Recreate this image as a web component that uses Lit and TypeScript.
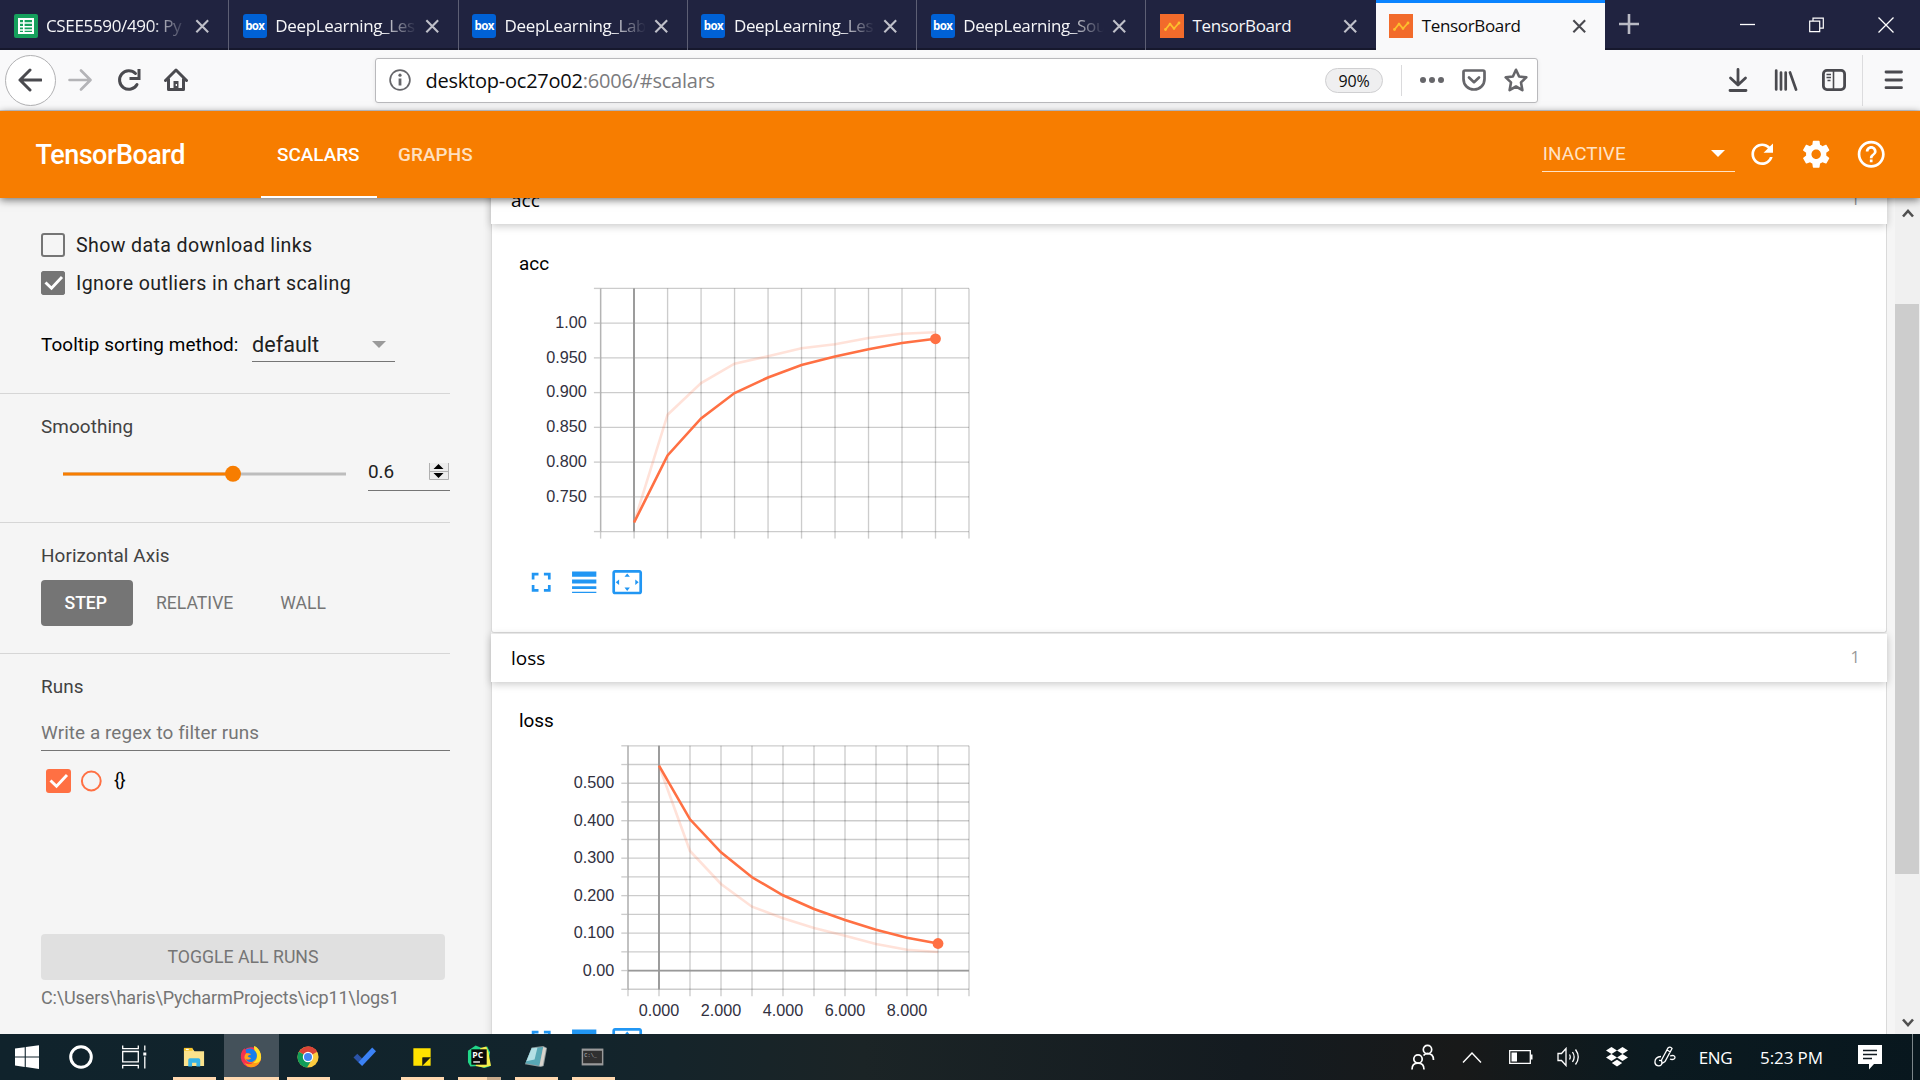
import { LitElement, html, css, svg, nothing } from "lit";
import { customElement, property } from "lit/decorators.js";

interface ChartSpec {
  box: [number, number, number, number];
  left: number;
  right: number;
  top: number;
  bottom: number;
  xs: number[];
  ys: number[];
  zeroX: number;
  zeroY?: number;
  yLabels: { y: number; text: string }[];
  xLabels: { x: number; text: string }[];
  smooth: number[];
  raw: number[];
}

const range = (n: number, start: number, step: number) =>
  Array.from({ length: n }, (_, i) => start + i * step);

const ACC: ChartSpec = {
  box: [519, 276, 460, 269],
  left: 600.6, right: 969, top: 288.4, bottom: 531.6,
  xs: range(12, 600.6, 33.49),
  ys: range(8, 288.4, 34.74),
  zeroX: 634,
  yLabels: [
    { y: 328, text: "1.00" }, { y: 362.7, text: "0.950" }, { y: 397, text: "0.900" },
    { y: 432, text: "0.850" }, { y: 467, text: "0.800" }, { y: 501.8, text: "0.750" },
  ],
  xLabels: [],
  smooth: [522.5, 455.5, 418.5, 393, 377.5, 365, 356.5, 349.3, 343, 338.8],
  raw: [522.5, 414.7, 383, 363.7, 356.3, 348.3, 344.3, 338, 333.7, 332.3],
};

const LOSS: ChartSpec = {
  box: [519, 733, 460, 291],
  left: 628, right: 969, top: 745.8, bottom: 989.3,
  xs: range(12, 628, 31),
  ys: range(14, 745.8, 18.73),
  zeroX: 659,
  zeroY: 970.6,
  yLabels: [
    { y: 788, text: "0.500" }, { y: 826, text: "0.400" }, { y: 863, text: "0.300" },
    { y: 901, text: "0.200" }, { y: 938, text: "0.100" }, { y: 976, text: "0.00" },
  ],
  xLabels: [
    { x: 659, text: "0.000" }, { x: 721, text: "2.000" }, { x: 783, text: "4.000" },
    { x: 845, text: "6.000" }, { x: 907, text: "8.000" },
  ],
  smooth: [765.7, 819.3, 852.3, 877.3, 895.3, 909, 920, 929.7, 937.7, 943.5],
  raw: [765.7, 851, 884, 906.7, 918.3, 928, 935.7, 944, 949.7, 952],
};

@customElement("line-chart")
class LineChart extends LitElement {
  @property({ attribute: false }) spec!: ChartSpec;

  static styles = css`
    :host { display: block; }
    svg { display: block; }
    .grid { stroke: #000; stroke-opacity: 0.2; stroke-width: 1.35; }
    .axis { stroke: #b4b4b4; stroke-width: 1.35; }
    .zero { stroke: #999; stroke-width: 1.9; }
    .tick { stroke: #ccc; stroke-width: 1.35; }
    text { font: 16.2px "Liberation Sans", Arial, sans-serif; fill: #32313f; }
    .end { text-anchor: end; }
    .mid { text-anchor: middle; }
    polyline { fill: none; stroke: #ff7043; stroke-width: 2.6; }
    .raw { stroke-opacity: 0.2; }
    .dot { fill: #ff7043; }
  `;

  render() {
    const s = this.spec;
    const points = (v: number[]) => v.map((y, i) => `${s.xs[i + 1]},${y}`).join(" ");
    return html`<svg width=${s.box[2]} height=${s.box[3]} viewBox=${s.box.join(" ")}>
      ${s.xs.map((x) => svg`<line class="grid" x1=${x} x2=${x} y1=${s.top} y2=${s.bottom} />
        <line class="tick" x1=${x} x2=${x} y1=${s.bottom} y2=${s.bottom + 7} />`)}
      ${s.ys.map((y) => svg`<line class="grid" x1=${s.left} x2=${s.right} y1=${y} y2=${y} />
        <line class="tick" x1=${s.left - 6.7} x2=${s.left} y1=${y} y2=${y} />`)}
      <line class="axis" x1=${s.left} x2=${s.left} y1=${s.top} y2=${s.bottom} />
      <line class="zero" x1=${s.zeroX} x2=${s.zeroX} y1=${s.top} y2=${s.bottom} />
      ${s.zeroY ? svg`<line class="zero" x1=${s.left} x2=${s.right} y1=${s.zeroY} y2=${s.zeroY} />` : nothing}
      ${s.yLabels.map((l) => svg`<text class="end" x=${s.left - 13.8} y=${l.y}>${l.text}</text>`)}
      ${s.xLabels.map((l) => svg`<text class="mid" x=${l.x} y="1016">${l.text}</text>`)}
      <polyline class="raw" points=${points(s.raw)} />
      <polyline points=${points(s.smooth)} />
      <circle class="dot" cx=${s.xs[10]} cy=${s.smooth[9]} r="5.4" />
    </svg>`;
  }
}

const P = {
  refresh: "M17.65 6.35C16.2 4.9 14.21 4 12 4c-4.42 0-7.99 3.58-7.99 8s3.57 8 7.99 8c3.73 0 6.84-2.55 7.73-6h-2.08c-.82 2.33-3.04 4-5.65 4-3.31 0-6-2.69-6-6s2.69-6 6-6c1.66 0 3.14.69 4.22 1.78L13 11h7V4l-2.35 2.35z",
  gear: "M19.43 12.98c.04-.32.07-.64.07-.98s-.03-.66-.07-.98l2.11-1.65c.19-.15.24-.42.12-.64l-2-3.46c-.12-.22-.39-.3-.61-.22l-2.49 1c-.52-.4-1.08-.73-1.69-.98l-.38-2.65C14.46 2.18 14.25 2 14 2h-4c-.25 0-.46.18-.49.42l-.38 2.65c-.61.25-1.17.59-1.69.98l-2.49-1c-.23-.09-.49 0-.61.22l-2 3.46c-.13.22-.07.49.12.64l2.11 1.65c-.04.32-.07.65-.07.98s.03.66.07.98l-2.11 1.65c-.19.15-.24.42-.12.64l2 3.46c.12.22.39.3.61.22l2.49-1c.52.4 1.08.73 1.69.98l.38 2.65c.03.24.24.42.49.42h4c.25 0 .46-.18.49-.42l.38-2.65c.61-.25 1.17-.59 1.69-.98l2.49 1c.23.09.49 0 .61-.22l2-3.46c.12-.22.07-.49-.12-.64l-2.11-1.65zM12 15.5c-1.93 0-3.5-1.57-3.5-3.5s1.57-3.5 3.5-3.5 3.5 1.57 3.5 3.5-1.57 3.5-3.5 3.5z",
  help: "M11 18h2v-2h-2v2zm1-16C6.48 2 2 6.48 2 12s4.48 10 10 10 10-4.48 10-10S17.52 2 12 2zm0 18c-4.41 0-8-3.59-8-8s3.59-8 8-8 8 3.59 8 8-3.59 8-8 8zm0-14c-2.21 0-4 1.79-4 4h2c0-1.1.9-2 2-2s2 .9 2 2c0 2-3 1.75-3 5h2c0-2.25 3-2.5 3-5 0-2.21-1.79-4-4-4z",
  fullscreen: "M7 14H5v5h5v-2H7v-3zm-2-4h2V7h3V5H5v5zm12 7h-3v2h5v-5h-2v3zM14 5v2h3v3h2V5h-5z",
  weight: "M3 17h18v-2H3v2zm0 3h18v-1H3v1zm0-7h18v-3H3v3zm0-9v4h18V4H3z",
  overscan: "M12.01 5.5L10 8h4l-1.99-2.5zM18 10v4l2.5-1.99L18 10zM6 10l-2.5 2.01L6 14v-4zm8 6h-4l2.01 2.5L14 16zm7-13H3c-1.1 0-2 .9-2 2v14c0 1.1.9 2 2 2h18c1.1 0 2-.9 2-2V5c0-1.1-.9-2-2-2zm0 16.01H3V4.99h18v14.02z",
};

const material = (d: string) => html`<svg class="mi" viewBox="0 0 24 24"><path fill="currentColor" d=${d} /></svg>`;

@customElement("scalar-category")
class ScalarCategory extends LitElement {
  @property() name = "";
  @property({ attribute: false }) spec!: ChartSpec;

  static styles = css`
    :host { display: block; }
    .head {
      height: 48px; display: flex; align-items: center; justify-content: space-between;
      padding: 1px 27px 0 20px; background: #fff; position: relative; color: #000; box-sizing: border-box;
      font: 19px/47px "Open Sans", "Noto Sans", sans-serif;
      box-shadow: 0 2px 8px rgba(0, 0, 0, 0.22);
    }
    .name { letter-spacing: 0; }
    .count { color: #999; font-size: 16.5px; line-height: 44px; padding-bottom: 3px; }
    .card {
      border: 1px solid #dadada; border-top: 0; border-radius: 0 0 3px 3px; background: #fff;
      padding: 27.5px 0 0 27px; box-sizing: border-box; height: 408.8px;
    }
    .title { font: 18.9px/24px Roboto, sans-serif; color: #000; }
    .tools { display: flex; gap: 11px; padding-left: 5.5px; color: #2196f3; }
    .tools.spaced { margin-top: 21.3px; }
    .mi { width: 32.4px; height: 32.4px; display: block; }
  `;

  render() {
    return html`
      <div class="head"><span class="name">${this.name}</span><span class="count">1</span></div>
      <div class="card">
        <div class="title">${this.name}</div>
        <line-chart .spec=${this.spec}></line-chart>
        <div class="tools ${this.spec.xLabels.length ? "" : "spaced"}">
          ${material(P.fullscreen)}${material(P.weight)}${material(P.overscan)}
        </div>
      </div>`;
  }
}

const closeIcon = html`<svg class="x" viewBox="0 0 16 16"><path d="M1.5 1.5 14.5 14.5M14.5 1.5 1.5 14.5" fill="none" stroke="currentColor" stroke-width="2.3" /></svg>`;

const favicons: Record<string, unknown> = {
  sheet: html`<svg class="fav" viewBox="0 0 24 24"><rect width="24" height="24" rx="2" fill="#16a05d" /><path fill="#fff" fill-rule="evenodd" d="M4 4h16v16H4zM6 6v2.2h3V6zm4.6 0v2.2H18V6zM6 9.8V12h3V9.8zm4.6 0V12H18V9.8zM6 13.5v1.8h3v-1.8zm4.6 0v1.8H18v-1.8zM6 16.7V18h3v-1.3zm4.6 0V18H18v-1.3z" /></svg>`,
  box: html`<span class="fav boxlogo">box</span>`,
  tb: html`<svg class="fav" viewBox="0 0 24 24"><rect width="24" height="24" fill="#f26b2b" /><path d="M5.500 15.500 10 10l4 4.500L19 9" fill="none" stroke="#fdbf2d" stroke-width="1.800" /><circle cx="5.500" cy="15.500" r="1.400" fill="#fdbf2d" /><circle cx="10" cy="10" r="1.300" fill="#fdbf2d" /><circle cx="14" cy="14.500" r="1.300" fill="#fdbf2d" /><circle cx="19" cy="9" r="1.400" fill="#fdbf2d" /></svg>`,
};

const TABS: { icon: string; title: string; fade?: boolean; active?: boolean }[] = [
  { icon: "sheet", title: "CSEE5590/490: Py", fade: true },
  { icon: "box", title: "DeepLearning_Les", fade: true },
  { icon: "box", title: "DeepLearning_Lab", fade: true },
  { icon: "box", title: "DeepLearning_Les", fade: true },
  { icon: "box", title: "DeepLearning_Sou", fade: true },
  { icon: "tb", title: "TensorBoard" },
  { icon: "tb", title: "TensorBoard", active: true },
];

const TASKS = [
  {
    cls: "open",
    art: svg`<path d="M2 4h9l2 2.500h10V22H2z" fill="#fbe28c" /><path d="M2 3h9v3H2z" fill="#f9c527" /><path d="M4 4h3v1.300H4z" fill="#fff" /><path d="M6.500 22.500V15.500q0-1.800 1.800-1.800h8.900q1.800 0 1.800 1.800v7h-4v-4H10.500v4z" fill="#36b3e8" />`,
  },
  {
    cls: "open active",
    art: svg`<circle cx="12.500" cy="12.800" r="10.500" fill="#f6305a" /><path d="M12.500 23.300A10.500 10.500 0 0 0 23 12.500C22.800 7 19.500 2.500 16 1c.3 3 .5 4-1 6-3 1-6 6-4 9-3-.3-5-2-6-4-1.500 5 2 11 7.500 11.300z" fill="#ff9d16" /><path d="M23 12.500C23 7 19.500 2.500 16 1c-1.500 3 2 6 2.500 9 .6 4-1 7-3.500 8.500C20.500 19.500 23 17 23 12.500z" fill="#ffe12b" /><path d="M7 5c4-3 9-1 11 3 1.500 4 .4 8-4 9.500-3 .8-6-.3-7-3 2 1 4 .7 5.500-1-2 0-3.500-.6-3.500-2 1-1 3-1 3.500-2-1.500-1-3-1-4.500-1C6.500 7.500 6.500 6.500 7 5z" fill="#167dee" /><path d="M7.500 8.500c1.500 0 3.500 0 4.800 1-.4 1.200-2.300 1-3.300 2 .4 1.400 2 1.600 3.500 2-2 2-4.500 2-6.500.500-1-2 0-4 1.500-5.500z" fill="#ffa51c" /><path d="M2 12C1.800 8 4 4.500 6 3.500c0 1.500.5 2.500 1.500 3.500C5 9 4.500 13 7 16c2 2.400 5 3 8 2-3 3.500-11.500 3-13-6z" fill="#f5324f" />`,
  },
  {
    cls: "open",
    art: svg`<circle cx="12.500" cy="12.500" r="11" fill="#fccb3f" /><path d="M12.500 12.500 3 7A11 11 0 0 1 22 7z" fill="#db4437" /><path d="M12.500 1.500A11 11 0 0 1 22 7H12.500z" fill="#db4437" /><path d="M3 7a11 11 0 0 0 8.500 16.500l5-8.500-4-2.500z" fill="#109d58" /><circle cx="12.500" cy="12.500" r="5.400" fill="#fff" /><circle cx="12.500" cy="12.500" r="4.200" fill="#4285f4" />`,
  },
  {
    cls: "",
    art: svg`<path d="M.5 13 4.500 9l5 5-4 4z" fill="#2b53a8" /><path d="M5.500 18 20 2.500l4 4L9.500 22z" fill="#3b82f6" />`,
  },
  {
    cls: "open",
    art: svg`<path d="M3.500 3.500h18V13H13v8.500H3.500z" fill="#ffe100" /><path d="M13 13h8.500L13 21.500z" fill="#1c1c10" /><path d="M21.500 13v8.500H13z" fill="#ffe100" />`,
  },
  {
    cls: "open multi",
    art: svg`<path d="M1 6 9 .5l7 3 5-2 3 6-1.500 9L24.500 22l-6 2-7-2-8 .500L1 18z" fill="#21d789" /><path d="M14 3l6-1.500 2.500 6 .500 4 2 10-8 2-8-1.500z" fill="#f4ee4b" /><rect x="4.500" y="4.500" width="16" height="16" fill="#0a0a0a" /><text x="5.500" y="13.500" font-size="9" font-weight="700" font-family="Open Sans, sans-serif" fill="#fff">PC</text><path d="M6.500 17h7v1.400h-7z" fill="#fff" />`,
  },
  {
    cls: "open",
    art: svg`<path d="M8 2.500 20 1l4 2-3.500 19-3 1L1 20z" fill="#8e9a9c" /><path d="M8 3.500 20 2l-4 19.500L1.500 19z" fill="#58a8b5" /><path d="M8 3.500 14 2.800 11 15 2.500 16.800z" fill="#b4e0e5" /><path d="M20 2l3 1.500-3.500 18-3.500.500z" fill="#d9d4cd" />`,
  },
  {
    cls: "open",
    art: svg`<rect x=".700" y="3.700" width="22.600" height="17.600" fill="#9a9a9a" /><rect x="2.200" y="6" width="19.600" height="13" fill="#303030" /><text x="3.500" y="12" font-size="5.500" font-family="Liberation Mono, monospace" fill="#bbb">C:\\_</text>`,
  },
];

@customElement("app-root")
class AppRoot extends LitElement {
  static styles = css`
    :host {
      display: flex; flex-direction: column; width: 1920px; height: 1080px; overflow: hidden;
      font-family: Roboto, sans-serif; background: #f5f5f5; white-space: nowrap;
    }
    * { box-sizing: border-box; }
    svg { display: block; flex: none; }

    .tabs { height: 50px; flex: none; display: flex; background: #202340; font-family: "Open Sans", "Noto Sans", sans-serif; box-shadow: inset 0 -2px #16182d; }
    .tab { width: 229.3px; display: flex; align-items: center; padding: 2px 18.5px 0 13.5px; color: #f6f6f8; border-right: 1px solid #5d5f74; flex: none; }
    .tab.active { background: #f9f9fa; color: #0c0c0d; border-right: 0; box-shadow: inset 0 3px #0a84ff; }
    .tab:nth-child(6) { border-right: 0; }
    .fav { width: 24px; height: 24px; flex: none; }
    .boxlogo { background: #0061d5; color: #fff; border-radius: 3px; font: 700 11.5px/23px "Open Sans", sans-serif; letter-spacing: -0.6px; text-align: center; }
    .tabname { flex: 1; min-width: 0; margin-left: 8.5px; font-size: 17px; letter-spacing: -0.35px; line-height: 30px; }
    .tabname.fade { -webkit-mask-image: linear-gradient(90deg, #000 74%, transparent 100%); mask-image: linear-gradient(90deg, #000 74%, transparent 100%); }
    .x { width: 14.5px; height: 14.5px; margin-left: 8px; color: #bfc0c9; }
    .active .x { color: #4a4a4f; }
    .plus { width: 22px; height: 22px; margin: 13px 0 0 13px; color: #b9bac4; }
    .winctl { margin-left: auto; display: flex; align-items: center; gap: 54px; padding-right: 26px; color: #fff; }

    .toolbar { height: 61px; flex: none; display: flex; align-items: center; background: #f9f9fa; border-bottom: 1px solid #d0d3da; color: #4a4a4f; }
    .nav { width: 375px; display: flex; align-items: center; padding-left: 5px; }
    .back { width: 51px; height: 51px; border: 1px solid #b1b1b3; border-radius: 50%; background: #fff; display: flex; align-items: center; justify-content: center; margin-right: 12px; padding-right: 1px; }
    .i24 { width: 24px; height: 24px; }
    .fwd { color: #b4b4b7; margin-right: 25px; }
    .home { margin-left: 23px; }
    .url { width: 1163px; height: 45px; background: #fff; border: 1px solid #b9b9bc; border-radius: 3px; box-shadow: 0 1px 4px rgba(0, 0, 0, 0.08); display: flex; align-items: center; padding: 0 9px 0 13px; color: #66666a; font-family: "Open Sans", "Noto Sans", sans-serif; }
    .addr { margin-left: 14.5px; font-size: 20px; color: #0c0c0d; flex: 1; letter-spacing: -0.23px; }
    .addr .dim { color: #7b7b7e; }
    .zoom { width: 58px; height: 25px; border: 1px solid #cfcfd1; border-radius: 13px; background: #efeff0; color: #0c0c0d; font-size: 16px; letter-spacing: -0.2px; line-height: 24px; text-align: center; }
    .vsep { width: 1px; height: 31px; background: #dadadc; margin: 0 18px; }
    .url .i24 + .i24 { margin-left: 18px; }
    .right { flex: 1; display: flex; align-items: center; padding-left: 188px; gap: 24px; }
    .right .bar { width: 1px; height: 51px; background: #dcdcde; margin: 0 -4px 0 -8px; }

    .appbar { height: 87px; flex: none; background: #f77d00; display: flex; align-items: center; color: #fff; box-shadow: 0 2px 8px rgba(0, 0, 0, 0.55); position: relative; z-index: 2; }
    .brand { margin-left: 35.5px; width: 225.5px; font-size: 27px; font-weight: 500; letter-spacing: -0.5px; }
    .apptab { height: 87px; line-height: 87px; padding: 0 16px; width: 116px; font-size: 18.9px; font-weight: 500; }
    .apptab.on { border-bottom: 2px solid #fff; }
    .apptab.off { color: #ffe0c0; padding-left: 21px; letter-spacing: 0.1px; }
    .drop { margin-left: auto; width: 193px; height: 39px; margin-top: -5px; border-bottom: 1px solid #ffe3c6; color: #ffe3c6; display: flex; align-items: center; justify-content: space-between; font-size: 18.9px; letter-spacing: 0.1px; padding: 4px 10px 0 1px; }
    .acts { display: flex; gap: 22px; padding: 0 33px 0 11px; }
    .mi { width: 32.4px; height: 32.4px; }

    .body { flex: 1; min-height: 0; display: flex; }
    .side { width: 491px; padding-right: 41px; display: flex; flex-direction: column; color: #212121; box-shadow: inset -8px 0 8px -8px rgba(0, 0, 0, 0.12); }
    .sec { border-bottom: 1px solid #d6d6d6; padding: 20px 0 0 41px; font-size: 18.9px; flex: none; }
    .s1 { height: 196px; padding-top: 34px; }
    .s2 { height: 129px; }
    .s3 { height: 131px; }
    .s4 { flex: 1; border: 0; display: flex; flex-direction: column; }
    .h { line-height: 25px; height: 25px; color: #424242; letter-spacing: 0.08px; }
    .check { display: flex; align-items: center; height: 26px; margin-bottom: 12px; font-size: 19.6px; letter-spacing: 0.38px; }
    .cb { width: 24px; height: 24px; border: 2px solid #757575; border-radius: 3px; margin-right: 11px; flex: none; }
    .cb.on { background: #757575; border: 0; overflow: hidden; }
    .tip { display: flex; height: 34px; margin-top: 32px; color: #000; }
    .tip .lbl { width: 211px; line-height: 33px; letter-spacing: 0.08px; }
    .sel { width: 143px; border-bottom: 1px solid #757575; font-size: 21.6px; line-height: 31px; display: flex; justify-content: space-between; align-items: center; color: #212121; padding-right: 9px; }
    .sliderrow { display: flex; height: 35px; margin-top: 17px; align-items: center; }
    .slider { margin-left: 22px; }
    .num { margin-left: 22px; flex: 1; height: 35px; border-bottom: 1px solid #757575; display: flex; align-items: center; justify-content: space-between; padding: 0 1px 3px 0; font-size: 18.9px; }
    .btns { display: flex; margin-top: 12px; height: 46px; line-height: 47.5px; color: #757575; font-size: 17.6px; }
    .btns span { padding: 0 23.5px; }
    .btns .sel2 { width: 91.5px; background: #757575; color: #fff; border-radius: 4px; font-weight: 500; }
    .regex { margin-top: 16px; height: 36px; line-height: 36px; border-bottom: 1px solid #757575; color: #757575; letter-spacing: 0.08px; }
    .run { display: flex; align-items: center; margin: 17px 0 0 5px; height: 25px; color: #000; font-size: 18px; letter-spacing: -0.5px; }
    .braces { margin-left: 2px; margin-top: -2px; }
    .toggle { margin-top: auto; width: 404px; height: 46px; line-height: 47.5px; text-align: center; background: #e0e0e0; border-radius: 4px; color: #757575; font-size: 17.7px; }
    .path { line-height: 24px; margin: 6px 0 24px; color: #757575; font-size: 18px; letter-spacing: -0.13px; }

    .pane { width: 1396px; position: relative; clip-path: inset(0 -8px 0 -8px); height: 836px; }
    scalar-category + scalar-category { margin-top: 1.2px; }
    .first { margin-top: -22px; display: block; }
    .gutter { width: 7px; margin-right: 1px; }
    .scroll { width: 25px; background: #f0f0f0; display: flex; flex-direction: column; align-items: center; padding: 10px 0 6px; }
    .thumb { width: 25px; height: 570px; background: #cdcdcd; border-right: 1px solid #f0f0f0; flex: none; }
    .lead { height: 86px; flex: none; }
    .tail { flex: 1; }

    .task { height: 46px; flex: none; background: linear-gradient(90deg, #10232c 0, #12242c 30%, #1b2426 45%, #141b20 65%, #181919 76%, #0b1a20 86%, #08171e 100%); display: flex; color: #fff; position: relative; z-index: 3; }
    .ti { width: 57px; height: 46px; display: flex; align-items: center; justify-content: center; flex: none; }
    .w54 { width: 54px; }
    .w57 { width: 57.5px; padding-right: 5px; }
    .ti.open { background: linear-gradient(#ffd9b0, #ffd9b0) 50% 100% / 43px 3px no-repeat; }
    .ti.active { width: 55px; margin: 0 1px; background: linear-gradient(#ffd9b0, #ffd9b0) 0 100% / 55px 3px no-repeat, #44515a; }
    .ti.multi { background: linear-gradient(90deg, #ffd9b0 67%, #c7aa8b 67%) 50% 100% / 43px 3px no-repeat; }
    .art { width: 24px; height: 24px; }
    .tray { margin-left: auto; display: flex; align-items: center; font-family: "Open Sans", "Noto Sans", sans-serif; font-size: 17px; }
    .tray > * { display: flex; justify-content: center; }
    .t48 { width: 48px; }
    .t49 { width: 49.5px; }
    .t53 { width: 53px; letter-spacing: -0.3px; }
    .t99 { width: 99px; letter-spacing: -0.1px; }
    .t58 { width: 58px; }
    .tray .desk { width: 1px; height: 46px; background: #7c868a; margin: 0 7px 0 13px; }
  `;

  private tick(bg: string) {
    return html`<svg width="25" height="24" viewBox="0 0 25 24"><rect width="25" height="24" rx="3" fill=${bg} /><path d="M4.500 11.500 10.500 17.300 21 6" fill="none" stroke="#fff" stroke-width="2.900" /></svg>`;
  }

  private tabs() {
    return html`<div class="tabs">
      ${TABS.map((t) => html`<div class="tab ${t.active ? "active" : ""}">
        ${favicons[t.icon]}<span class="tabname ${t.fade ? "fade" : ""}">${t.title}</span>${closeIcon}
      </div>`)}
      <svg class="plus" viewBox="0 0 22 22"><path d="M11 1v20M1 11h20" stroke="currentColor" stroke-width="2.600" /></svg>
      <div class="winctl">
        <svg width="15" height="16" viewBox="0 0 15 16"><path d="M0 7.500h15" stroke="#fff" stroke-width="1.300" /></svg>
        <svg width="15" height="16" viewBox="0 0 15 16"><path d="M.7 4.200h10v10.500h-10zM4 4V1.200h10.300v10H11" fill="none" stroke="#fff" stroke-width="1.200" /></svg>
        <svg width="16" height="16" viewBox="0 0 16 16"><path d="M.5.5l15 15M15.500.5l-15 15" stroke="#fff" stroke-width="1.300" /></svg>
      </div>
    </div>`;
  }

  private toolbar() {
    return html`<div class="toolbar">
      <div class="nav">
        <span class="back"><svg class="i24" viewBox="0 0 24 24"><path d="M23 12H2M12 2 2 12l10 10" fill="none" stroke="currentColor" stroke-width="3" stroke-linecap="round" stroke-linejoin="round" /></svg></span>
        <svg class="i24 fwd" viewBox="0 0 24 24"><path d="M1.500 12H22M13 2.500 22.500 12 13 21.500" fill="none" stroke="currentColor" stroke-width="2.600" stroke-linecap="round" stroke-linejoin="round" /></svg>
        <svg class="i24" viewBox="0 0 24 24"><path d="M20 16.500A9.300 9.300 0 1 1 18.500 5.500" fill="none" stroke="currentColor" stroke-width="3" stroke-linecap="round" /><path d="M22 1v9.500H12.500" fill="none" stroke="currentColor" stroke-width="3" /></svg>
        <svg class="i24 home" viewBox="0 0 24 24"><path d="M1.500 12.500 12 2l10.500 10.500M4.500 11v10.500h15V11" fill="none" stroke="currentColor" stroke-width="3" stroke-linecap="round" stroke-linejoin="round" /><path d="M9.500 21v-8h5v8z" fill="currentColor" /><rect x="11.700" y="16" width="1.300" height="2" fill="#fff" /></svg>
      </div>
      <div class="url">
        <svg width="22" height="22" viewBox="0 0 22 22"><circle cx="11" cy="11" r="9.900" fill="none" stroke="currentColor" stroke-width="1.700" /><circle cx="11" cy="6.200" r="1.600" fill="currentColor" /><path d="M11 9.500v7" stroke="currentColor" stroke-width="2.800" /></svg>
        <span class="addr">desktop-oc27o02<span class="dim">:6006/#scalars</span></span>
        <span class="zoom">90%</span><span class="vsep"></span>
        <svg class="i24" viewBox="0 0 24 24" fill="currentColor"><circle cx="3" cy="12" r="3" /><circle cx="12" cy="12" r="3" /><circle cx="21" cy="12" r="3" /></svg>
        <svg class="i24" viewBox="0 0 24 24" fill="none" stroke="currentColor" stroke-width="2.700" stroke-linecap="round" stroke-linejoin="round"><path d="M3 2.500h18q1.500 0 1.500 1.500v7c0 6-4.500 10.500-10.500 10.500S1.500 17 1.500 11V4Q1.500 2.500 3 2.500z" /><path d="M7 9.500l5 4.700 5-4.700" /></svg>
        <svg class="i24" viewBox="0 0 24 24" fill="none" stroke="currentColor" stroke-width="2.600" stroke-linejoin="round"><path d="M12 1.800l3.100 6.700 7.200.9-5.300 5 1.400 7.800L12 18.500l-6.400 3.700L7 14.400 1.700 9.400l7.200-.9z" /></svg>
      </div>
      <div class="right">
        <svg class="i24" viewBox="0 0 24 24" fill="none" stroke="currentColor" stroke-width="2.800" stroke-linecap="round" stroke-linejoin="round"><path d="M12 1.500v15M4.500 10l7.500 7 7.500-7M4 22.500h16" /></svg>
        <svg class="i24" viewBox="0 0 24 24" fill="none" stroke="currentColor" stroke-width="2.700" stroke-linecap="round"><path d="M2.200 2.500v19M7 4.500v17M11.700 4.500v17M16 4.500l6 17" /></svg>
        <svg class="i24" viewBox="0 0 24 24" fill="none" stroke="currentColor"><rect x="1.400" y="2.400" width="21.200" height="19.200" rx="3.500" stroke-width="2.800" /><path d="M11.500 3v18" stroke-width="1.600" /><path d="M4.500 6.500h4.500M4.500 9.500h4.500M5.500 12.500h3" stroke-width="1.500" /></svg>
        <span class="bar"></span>
        <svg class="i24" viewBox="0 0 24 24" fill="none" stroke="currentColor" stroke-width="2.800" stroke-linecap="round"><path d="M3 4h15.500M3 12h15.500M3 19.700h15.500" /></svg>
      </div>
    </div>`;
  }

  private side() {
    return html`<div class="side">
      <div class="sec s1">
        <div class="check"><span class="cb"></span>Show data download links</div>
        <div class="check"><span class="cb on">${this.tick("#757575")}</span>Ignore outliers in chart scaling</div>
        <div class="tip"><span class="lbl">Tooltip sorting method:</span>
          <span class="sel">default<svg width="14" height="7" viewBox="0 0 14 7"><path d="M0 0h14L7 7z" fill="#9a9a9a" /></svg></span></div>
      </div>
      <div class="sec s2">
        <div class="h">Smoothing</div>
        <div class="sliderrow">
          <svg class="slider" width="283" height="18" viewBox="0 0 283 18"><path d="M0 9h283" stroke="#bdbdbd" stroke-width="3" /><path d="M0 9h170" stroke="#f77d00" stroke-width="3" /><circle cx="170" cy="8.800" r="8" fill="#f77d00" /></svg>
          <div class="num">0.6<svg width="20" height="18" viewBox="0 0 20 18"><rect x=".5" y="0" width="19" height="16.500" fill="#ececec" /><path d="M.5 0v16.500h19V0M.5 8.500h19" fill="none" stroke="#b0b0b0" /><path d="M4.500 6 9.500 1l5 5zM4.500 10h10l-5 5z" fill="#000" /></svg></div>
        </div>
      </div>
      <div class="sec s3">
        <div class="h">Horizontal Axis</div>
        <div class="btns"><span class="sel2">STEP</span><span>RELATIVE</span><span>WALL</span></div>
      </div>
      <div class="sec s4">
        <div class="h">Runs</div>
        <div class="regex">Write a regex to filter runs</div>
        <div class="run">${this.tick("#ff7043")}
          <svg width="41" height="22" viewBox="0 0 41 22"><circle cx="20.300" cy="11" r="9.400" fill="none" stroke="#ff7043" stroke-width="2" /></svg><span class="braces">{}</span></div>
        <div class="toggle">TOGGLE ALL RUNS</div>
        <div class="path">C:\\Users\\haris\\PycharmProjects\\icp11\\logs1</div>
      </div>
    </div>`;
  }

  private taskbar() {
    return html`<div class="task">
      <div class="ti w54"><svg class="art" viewBox="0 0 24 24" fill="#fff"><path d="M0 3.500 9.700 2.200v9.300H0zM10.800 2 24 .2v11.300H10.800zM0 12.600h9.700v9.300L0 20.500zM10.800 12.600H24V24l-13.200-1.900z" /></svg></div>
      <div class="ti w54"><svg class="art" viewBox="0 0 24 24"><circle cx="12" cy="12" r="10.300" fill="none" stroke="#fff" stroke-width="3" /></svg></div>
      <div class="ti w57"><svg width="25" height="24" viewBox="0 0 25 24" fill="none" stroke="#fff" stroke-width="1.300"><path d="M.7.5v3.200h15.600V.5M.7 6.500h15.600v10.300H.7zM.7 23.500v-3.200h15.600v3.200M22.800.5v5M22.800 11.500v12" /><path d="M21.300 7.500h3v3h-3z" fill="#fff" stroke="none" /></svg></div>
      ${TASKS.map((t) => html`<div class="ti ${t.cls}"><svg class="art" viewBox="0 0 25 25">${t.art}</svg></div>`)}
      <div class="tray">
        <span class="t49"><svg width="24" height="26" viewBox="0 0 24 26" fill="none" stroke="#fff" stroke-width="1.700"><circle cx="16.500" cy="5.500" r="4.200" /><circle cx="7" cy="15" r="4.200" /><path d="M1 25.500c0-4 2.500-6.300 6-6.300s6 2.300 6 6.300M12.500 11.500c1-1.200 2.300-1.800 4-1.800 3.500 0 6 2 6 6.300" /></svg></span>
        <span class="t49"><svg width="20" height="11" viewBox="0 0 20 11"><path d="M1 10.500 10 1l9 9.500" fill="none" stroke="#fff" stroke-width="1.400" /></svg></span>
        <span class="t48"><svg width="24" height="14" viewBox="0 0 24 14"><path d="M.7.700h20.600v12.600H.7z" fill="none" stroke="#fff" stroke-width="1.300" /><path d="M2.500 2.500h5.500v9H2.500zM22 4.500h1.500v5H22z" fill="#fff" /></svg></span>
        <span class="t48"><svg width="24" height="20" viewBox="0 0 24 20" fill="none" stroke="#fff" stroke-width="1.300"><path d="M1 6.500h3.500L9 1.500v17l-4.500-5H1z" /><path d="M12.500 7.500q1.500 2.500 0 5M15.500 5q3.300 5 0 10M18.500 2.500q5.500 7.500 0 15" /></svg></span>
        <span class="t48"><svg width="22" height="20" viewBox="0 0 22 20" fill="#fff"><path d="M5.500 0 11 3.500 5.500 7 0 3.500zM16.500 0 22 3.500 16.500 7 11 3.500zM5.500 7 11 10.500 5.500 14 0 10.500zM16.500 7l5.500 3.500-5.500 3.500L11 10.500zM11 12.700l5.200 3.400L11 19.600l-5.200-3.500z" /></svg></span>
        <span class="t48"><svg width="22" height="22" viewBox="0 0 22 22" fill="none" stroke="#fff" stroke-width="1.300"><path d="M8 17.500 7.500 14 14 2q2-2 4 .500L11 15.500zM13 4l3.500 2M16 10c3-1 5-.5 5 1.500 0 2-3 2.500-5 1.500M7 10.500c-4 0-6.500 2.500-6 6.500 1 3.500 6.500 4 7 0 0-2-1-3-3-2.500" /></svg></span>
        <span class="t53">ENG</span><span class="t99">5:23 PM</span>
        <span class="t58"><svg width="24" height="25" viewBox="0 0 24 25"><path d="M0 0h24v19h-8l-5 5.500V19H0z" fill="#fff" /><path d="M5 5.500h14M5 9.500h14M5 13.500h9" stroke="#101a20" stroke-width="1.400" /></svg></span>
        <span class="desk"></span>
      </div>
    </div>`;
  }

  render() {
    return html`
      ${this.tabs()} ${this.toolbar()}
      <div class="appbar">
        <span class="brand">TensorBoard</span>
        <span class="apptab on">SCALARS</span><span class="apptab off">GRAPHS</span>
        <span class="drop">INACTIVE<svg width="14" height="7" viewBox="0 0 14 7"><path d="M0 0h14L7 7z" fill="#fff" /></svg></span>
        <span class="acts">${material(P.refresh)}${material(P.gear)}${material(P.help)}</span>
      </div>
      <div class="body">
        ${this.side()}
        <div class="pane">
          <scalar-category class="first" name="acc" .spec=${ACC}></scalar-category>
          <scalar-category name="loss" .spec=${LOSS}></scalar-category>
        </div>
        <div class="gutter"></div>
        <div class="scroll">
          <svg width="12" height="10" viewBox="0 0 12 10"><path d="M1 8.500 6 3l5 5.500" fill="none" stroke="#505050" stroke-width="2.600" /></svg>
          <div class="lead"></div>
          <div class="thumb"></div>
          <div class="tail"></div>
          <svg width="12" height="10" viewBox="0 0 12 10"><path d="M1 1.500 6 7l5-5.500" fill="none" stroke="#505050" stroke-width="2.600" /></svg>
        </div>
      </div>
      ${this.taskbar()}
    `;
  }
}
